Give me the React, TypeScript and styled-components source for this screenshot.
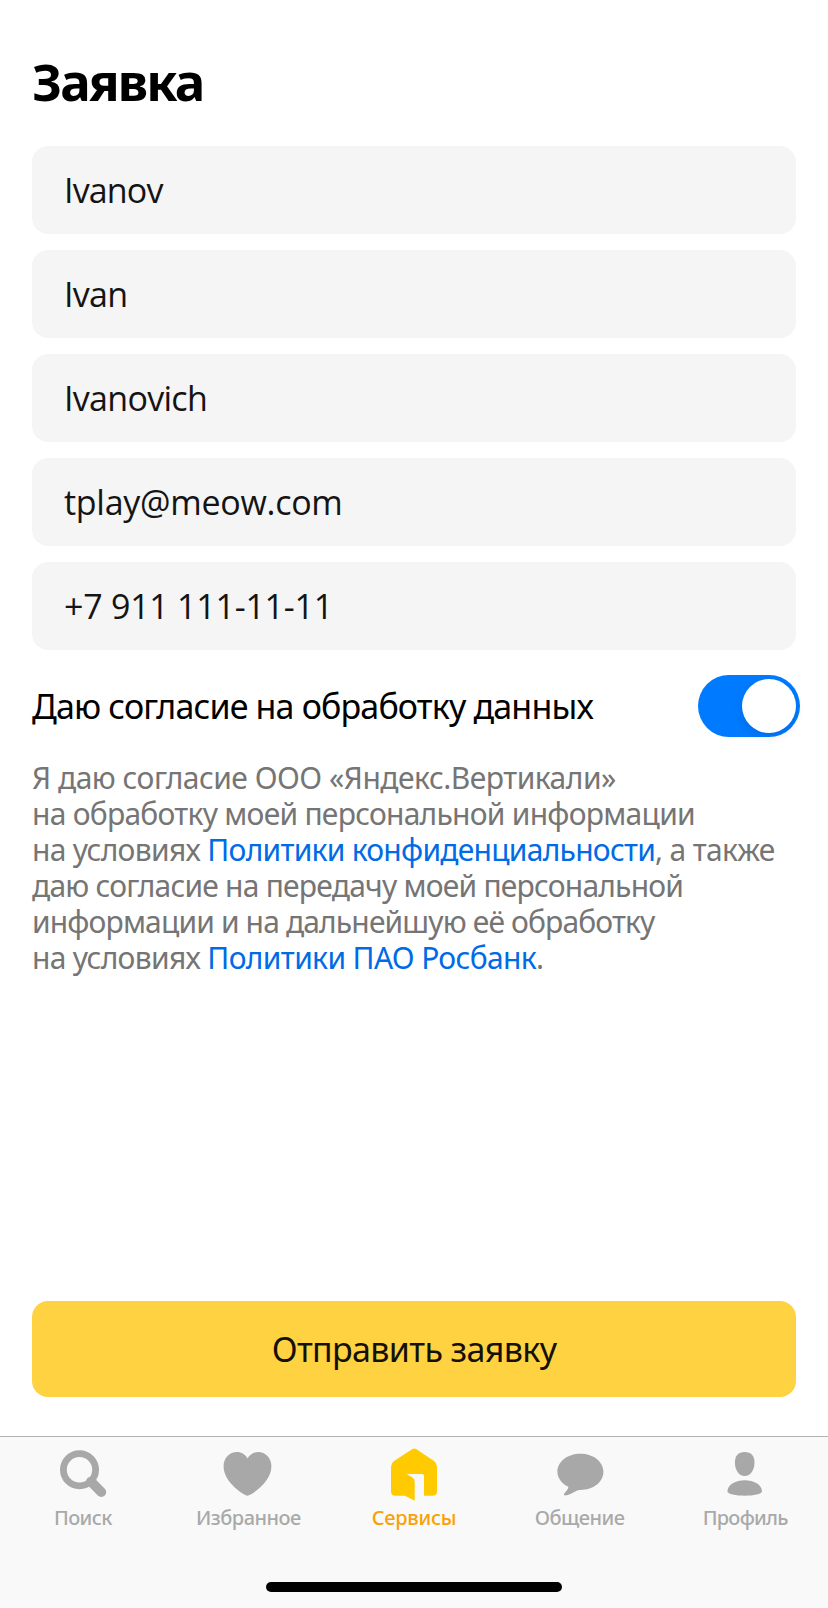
import React from "react";
import styled, { createGlobalStyle } from "styled-components";

const GlobalStyle = createGlobalStyle`
  *, *::before, *::after { box-sizing: border-box; }
  body {
    margin: 0;
    background: #fff;
    font-family: "Noto Sans", sans-serif;
  }
`;

const Screen = styled.div`
  display: flex;
  flex-direction: column;
  width: 828px;
  height: 1608px;
  overflow: hidden;
  background: #fff;
`;

const Content = styled.main`
  flex: 1;
  display: flex;
  flex-direction: column;
  padding: 47px 32px 39px;
`;

const Title = styled.h1`
  margin: 0 0 31px;
  font: 700 51px/68px "Noto Sans", sans-serif;
  letter-spacing: -1.9px;
  color: #000;
`;

const Fields = styled.div`
  display: flex;
  flex-direction: column;
  gap: 16px;
`;

const Field = styled.div<{ $tracking: number }>`
  display: flex;
  align-items: center;
  height: 88px;
  padding: 0 32px;
  border-radius: 16px;
  background: #f5f5f5;
  color: #141414;
  font-family: "Open Sans", "Noto Sans", sans-serif;
  font-size: 34px;
  letter-spacing: ${(p) => p.$tracking}px;
  white-space: pre;
`;

const ConsentRow = styled.div`
  display: flex;
  align-items: center;
  justify-content: space-between;
  height: 62px;
  margin: 25px -4px 0 0;
`;

const ConsentLabel = styled.span`
  font-size: 34px;
  letter-spacing: -0.84px;
  color: #000;
  white-space: nowrap;
`;

const Switch = styled.div`
  display: flex;
  justify-content: flex-end;
  width: 102px;
  height: 62px;
  padding: 4px;
  border-radius: 31px;
  background: #007aff;
`;

const Knob = styled.div`
  width: 54px;
  height: 54px;
  border-radius: 50%;
  background: #fff;
  box-shadow: 0 4px 10px rgba(0, 0, 0, 0.1);
`;

const Legal = styled.p`
  margin: 23px 0 0;
  font-size: 30px;
  line-height: 36px;
  color: #757575;
`;

const LegalLine = styled.span<{ $tracking: number }>`
  display: block;
  white-space: pre;
  letter-spacing: ${(p) => p.$tracking}px;
`;

const PolicyLink = styled.a<{ $tracking: number }>`
  color: #006be6;
  letter-spacing: ${(p) => p.$tracking}px;
`;

const Submit = styled.button`
  height: 96px;
  margin-top: auto;
  padding: 0;
  border: 0;
  border-radius: 16px;
  background: #ffd242;
  color: #141005;
  font-family: inherit;
  font-size: 34px;
  letter-spacing: -0.65px;
`;

const TabBar = styled.nav`
  display: flex;
  flex-direction: column;
  align-items: center;
  height: 172px;
  border-top: 1px solid #b2b2b2;
  background: #f9f9f9;
`;

const Tabs = styled.div`
  display: grid;
  grid-template-columns: repeat(5, 1fr);
  width: 100%;
`;

const Tab = styled.div<{ $active?: boolean }>`
  display: flex;
  flex-direction: column;
  align-items: center;
  gap: 1px;
  padding-top: 7px;
  color: ${(p) => (p.$active ? "#ffcb00" : "#a8a8a8")};
`;

const TabIcon = styled.svg`
  width: 56px;
  height: 60px;
  fill: currentColor;
`;

const TabLabel = styled.span<{ $active?: boolean; $tracking: number }>`
  font: 500 20px/26px "Noto Sans", sans-serif;
  letter-spacing: ${(p) => p.$tracking}px;
  color: ${(p) => (p.$active ? "#f9a106" : "#a9a9a9")};
`;

const HomeIndicator = styled.div`
  width: 296px;
  height: 10px;
  margin: auto 0 16px;
  border-radius: 5px;
  background: #000;
`;

const fields = [
  { value: "Ivanov", tracking: -0.85 },
  { value: "Ivan", tracking: -0.7 },
  { value: "Ivanovich", tracking: -0.7 },
  { value: "tplay@meow.com", tracking: -0.28 },
  { value: "+7 911 111-11-11", tracking: -0.25 },
];

const tabs = [
  {
    label: "Поиск",
    tracking: -0.6,
    icon: (
      <>
        <circle cx="24.5" cy="25.7" r="16.1" fill="none" stroke="currentColor" strokeWidth="6.8" />
        <path d="M36 37.6 46.3 48.1" stroke="currentColor" strokeWidth="9.8" strokeLinecap="round" />
      </>
    ),
  },
  {
    label: "Избранное",
    tracking: -0.5,
    icon: (
      <path d="M27.5 51.7C24 51.2 3.6 38.5 3.6 22.5 3.6 13.500 9.800 8 16.800 8c4.700 0 8.700 2.500 10.700 6.500 2-4 6-6.500 10.700-6.500 7 0 13.200 5.500 13.200 14.500 0 16-20.400 28.700-23.900 29.200Z" />
    ),
  },
  {
    label: "Сервисы",
    tracking: -0.27,
    active: true,
    icon: (
      <path d="M26.500 5Q28.300 3.900 30.100 5L48 17Q51 19.200 51 22.500V47.500Q51 51.700 46.800 51.700H38V32Q38 30 36 30H20.700L26.500 33.400Q28.700 35 28.700 37.500V56.700L19 51.700H9.200Q5 51.700 5 47.500V22.500Q5 19.200 8 17Z" />
    ),
  },
  {
    label: "Общение",
    tracking: -0.53,
    icon: (
      <path d="M28.400 9.700C41.500 9.700 51.400 17.600 51.400 27.800S41.500 46 28.400 46C26.500 46 25.500 46.300 24.200 47 20.500 48.900 16.500 51.400 13.200 51.400 11.800 51.400 11.600 50.300 12.500 49.200 14.500 47 16.200 45.200 16.400 42.800 9.500 39.500 5.400 34 5.400 27.800 5.400 17.600 15.300 9.700 28.400 9.700Z" />
    ),
  },
  {
    label: "Профиль",
    tracking: -0.77,
    icon: (
      <>
        <path d="M27.700 8C34.200 8 37.500 12 37.500 18.500 37.500 26 33.600 32 27.700 32S17.900 26 17.900 18.500C17.900 12 21.200 8 27.700 8Z" />
        <path d="M27.700 36.300C36.500 36.300 44.900 40.500 44.900 47.300 44.900 50.400 36.500 51.700 27.700 51.700S10.500 50.400 10.500 47.300C10.500 40.500 18.900 36.300 27.700 36.300Z" />
      </>
    ),
  },
];

export default function App() {
  return (
    <Screen>
      <GlobalStyle />
      <Content>
        <Title>Заявка</Title>
        <Fields>
          {fields.map((f) => (
            <Field key={f.value} $tracking={f.tracking}>{f.value}</Field>
          ))}
        </Fields>
        <ConsentRow>
          <ConsentLabel>Даю согласие на обработку данных</ConsentLabel>
          <Switch role="switch" aria-checked="true">
            <Knob />
          </Switch>
        </ConsentRow>
        <Legal>
          <LegalLine $tracking={-0.5}>Я даю согласие ООО «Яндекс.Вертикали»</LegalLine>
          <LegalLine $tracking={-0.74}>на обработку моей персональной информации</LegalLine>
          <LegalLine $tracking={-0.68}>
            {"на условиях "}
            <PolicyLink $tracking={-0.74}>Политики конфиденциальности</PolicyLink>
            {", а также"}
          </LegalLine>
          <LegalLine $tracking={-0.78}>даю согласие на передачу моей персональной</LegalLine>
          <LegalLine $tracking={-0.86}>информации и на дальнейшую её обработку</LegalLine>
          <LegalLine $tracking={-0.68}>
            {"на условиях "}
            <PolicyLink $tracking={-0.64}>Политики ПАО Росбанк</PolicyLink>.
          </LegalLine>
        </Legal>
        <Submit type="button">Отправить заявку</Submit>
      </Content>
      <TabBar>
        <Tabs>
          {tabs.map((t) => (
            <Tab key={t.label} $active={t.active}>
              <TabIcon viewBox="0 0 56 60">{t.icon}</TabIcon>
              <TabLabel $active={t.active} $tracking={t.tracking}>{t.label}</TabLabel>
            </Tab>
          ))}
        </Tabs>
        <HomeIndicator />
      </TabBar>
    </Screen>
  );
}
